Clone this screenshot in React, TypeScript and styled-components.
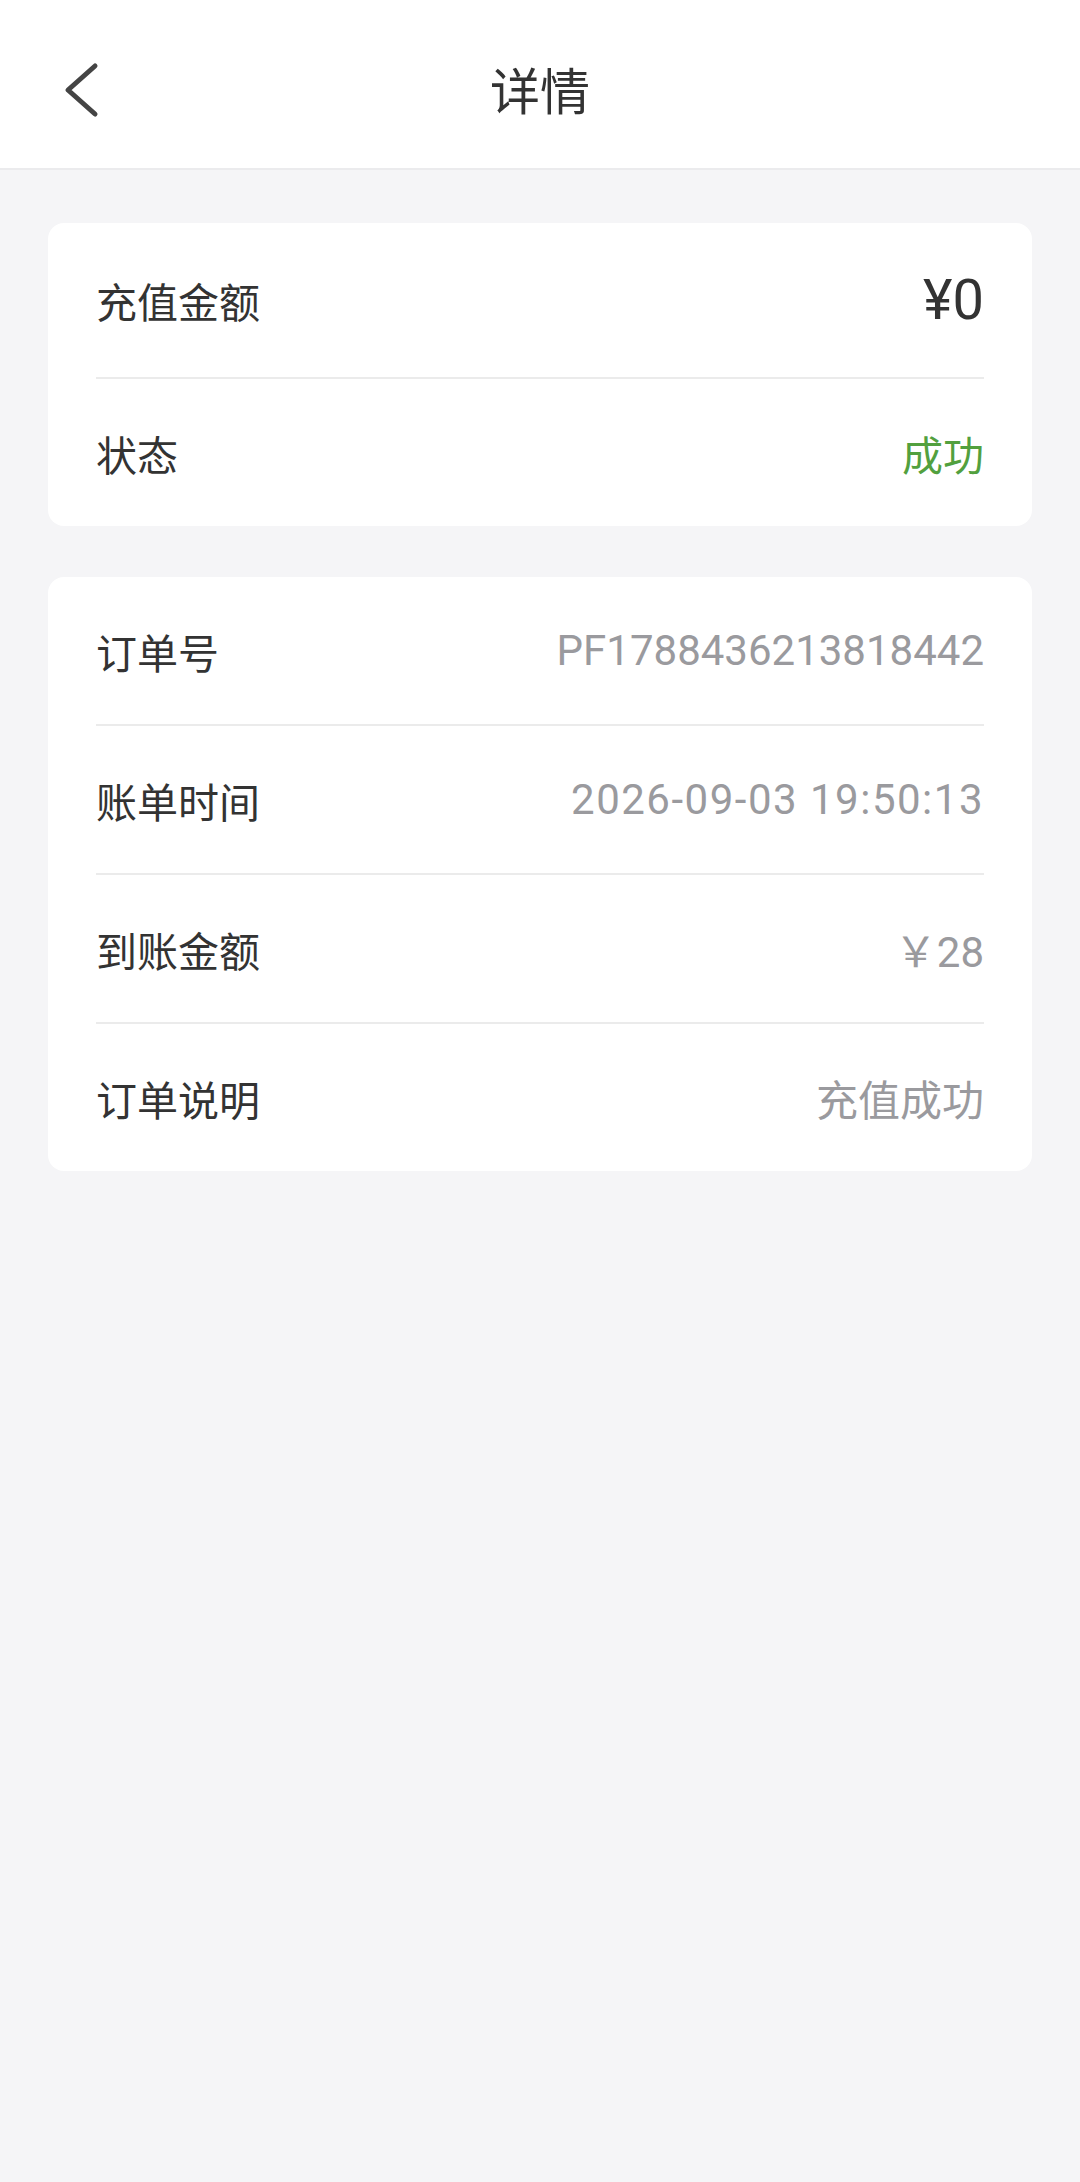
import React from 'react'
import styled, { createGlobalStyle } from 'styled-components'

const GlobalStyle = createGlobalStyle`
  html, body {
    margin: 0;
    padding: 0;
    background: #f5f5f7;
  }
  body {
    font-family: Roboto, "Noto Sans CJK SC", sans-serif;
    color: #333;
  }
`

const Page = styled.div`
  min-height: 2182px;
  background: #f5f5f7;
`

const Header = styled.header`
  position: relative;
  height: 160px;
  padding-top: 8px;
  background: #fff;
  border-bottom: 2px solid #ebebed;
  display: flex;
  align-items: center;
  justify-content: center;
`

const BackButton = styled.button`
  position: absolute;
  left: 56px;
  top: 54px;
  width: 52px;
  height: 72px;
  padding: 0;
  border: none;
  background: none;
  display: flex;
  align-items: center;
  justify-content: center;
`

const Title = styled.h1`
  margin: 0;
  font-family: "Noto Sans CJK SC", sans-serif;
  font-weight: 400;
  font-size: 50px;
  color: #333;
`

const Content = styled.main`
  padding: 53px 48px 0;
  display: flex;
  flex-direction: column;
  gap: 51px;
`

const Card = styled.section`
  background: #fff;
  border-radius: 16px;
  padding: 0 48px;
`

const Row = styled.div<{ $h?: number }>`
  height: ${({ $h }) => $h ?? 147}px;
  display: flex;
  align-items: center;
  justify-content: space-between;
  & + & {
    border-top: 2px solid #ebebeb;
  }
`

const Label = styled.span`
  font-family: "Noto Sans CJK SC", sans-serif;
  font-size: 41px;
  color: #333;
`

const Value = styled.span<{ $tone?: 'dark' | 'muted' | 'success'; $size?: number; $spacing?: number }>`
  font-family: Roboto, "Noto Sans CJK SC", sans-serif;
  font-size: ${({ $size }) => $size ?? 42}px;
  letter-spacing: ${({ $spacing }) => $spacing ?? 0}px;
  color: ${({ $tone }) =>
    $tone === 'dark' ? '#333' : $tone === 'success' ? '#52a03e' : '#9a9a9e'};
`

const ChevronLeft = () => (
  <svg width="36" height="56" viewBox="0 0 36 56" fill="none">
    <polyline
      points="31,4 4,28 31,52"
      stroke="#444"
      strokeWidth="5"
      strokeLinecap="round"
      strokeLinejoin="round"
    />
  </svg>
)

const details = [
  { label: '订单号', value: 'PF1788436213818442' },
  { label: '账单时间', value: '2026-09-03 19:50:13', spacing: 1.5 },
  { label: '到账金额', value: '￥28' },
  { label: '订单说明', value: '充值成功' },
]

export default function App() {
  return (
    <Page>
      <GlobalStyle />
      <Header>
        <BackButton aria-label="返回">
          <ChevronLeft />
        </BackButton>
        <Title>详情</Title>
      </Header>
      <Content>
        <Card>
          <Row $h={154}>
            <Label>充值金额</Label>
            <Value $tone="dark" $size={56}>¥0</Value>
          </Row>
          <Row>
            <Label>状态</Label>
            <Value $tone="success" $size={41}>成功</Value>
          </Row>
        </Card>
        <Card>
          {details.map((d) => (
            <Row key={d.label}>
              <Label>{d.label}</Label>
              <Value $spacing={d.spacing}>{d.value}</Value>
            </Row>
          ))}
        </Card>
      </Content>
    </Page>
  )
}
